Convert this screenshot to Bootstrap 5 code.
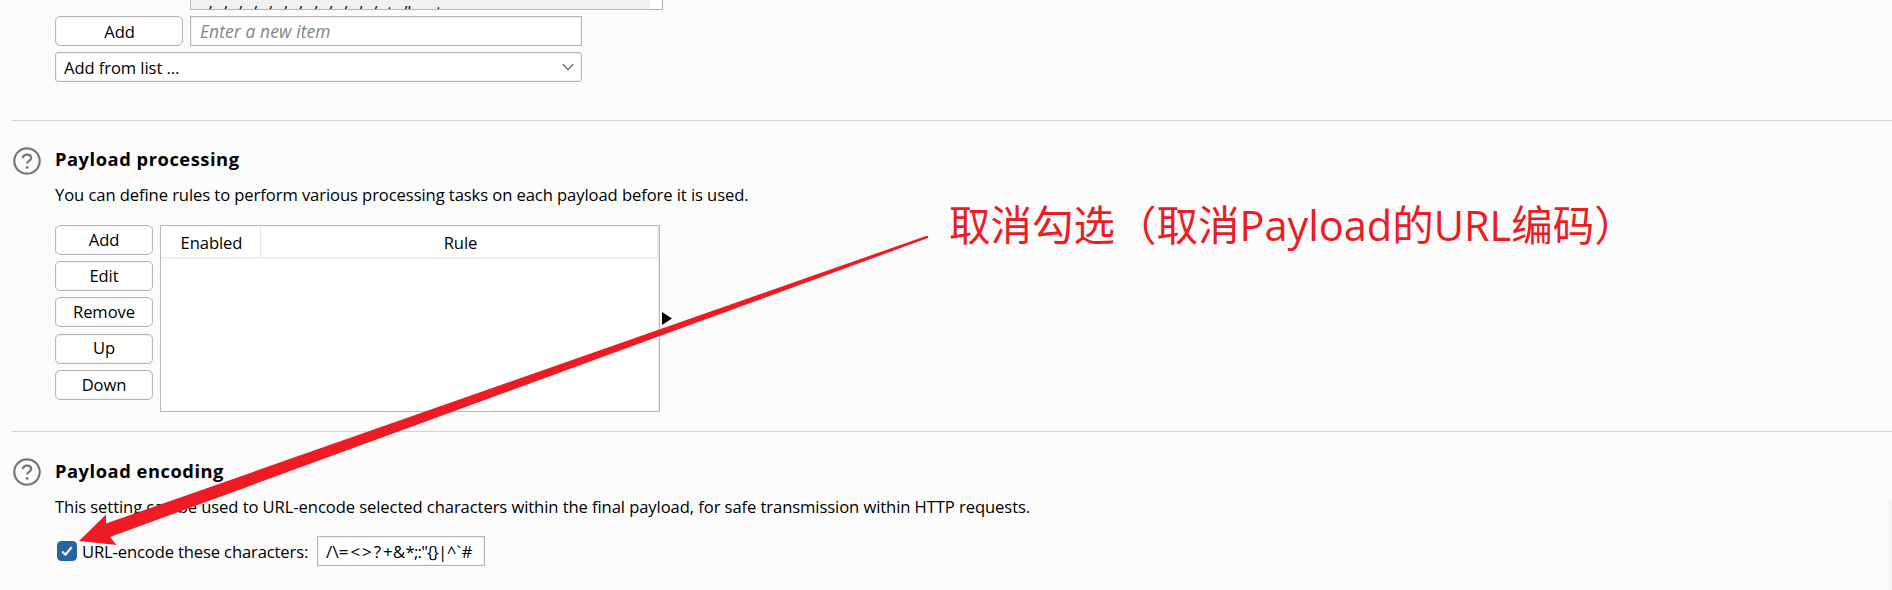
<!DOCTYPE html>
<html lang="en">
<head>
<meta charset="utf-8">
<title>Payload settings</title>
<link href="https://cdn.jsdelivr.net/npm/bootstrap@5.3.0/dist/css/bootstrap.min.css" rel="stylesheet">
<style>
body{width:1892px;height:590px;overflow:hidden;background:#fbfbfb;color:#000;font:16.6px/30px "Open Sans","Noto Sans CJK SC",sans-serif;letter-spacing:-.085px}
.pane{height:590px}
.items{width:473px;height:10px;margin-left:190px;border:1px solid #b9b3b3;border-top:0}
.item-row{width:459px;height:9px;background:#f1f1f1;padding-left:6px;line-height:24px;font-size:17px;letter-spacing:-.04px}
.tool{height:30px;padding:0;line-height:26.500px;font-size:inherit;letter-spacing:inherit;background:#fff;border:1px solid #b9b3b5;border-radius:5px;color:#000;box-shadow:inset 0 0 0 1px #f7f5f5}
.tool-wide{width:128px;line-height:27px;padding-left:1px}
.field{height:30px;padding:0 9px;line-height:28px;font-size:17px;background:#fff;border:1px solid #b9b3b5;border-radius:0;color:#000;box-shadow:inset 0 0 0 1px #f3f1f1}
.new-item{width:392px;margin-left:-1px;color:#858585;font-style:italic;font-size:17.4px;letter-spacing:.12px}
.pick{width:527px;border-radius:3px;padding:0 7px 0 8px;font-size:16.6px;line-height:29px;margin-top:6px}
.rule-line{height:1px;margin-left:12px;background:#d3d3d3}
.help{width:28px;height:28px;margin:3px 14px 0 13px;flex:none}
.title{font-size:18.3px;font-weight:700;letter-spacing:.55px;line-height:30px;margin:0}
.buttons{width:98px;margin-right:7px;row-gap:6.19px}
.rules{width:500px;height:187px;background:#fff;border:1px solid #b9b6b6;box-shadow:inset -1px 0 0 #eee}
.rules-head{height:33px;border-bottom:2px solid #eee;line-height:34px}
.col-on{width:100px;padding-left:2px;border-right:1px solid #e6e6e6}
.col-rule{padding-left:3px;border-right:2px solid #e9e9e9}
.check{width:20px;height:20px;margin:5px 5px 0 2px;flex:none}
.chars-label{width:226px;letter-spacing:-.14px;white-space:nowrap;line-height:31px}
.chars{width:168px;margin-left:9px;letter-spacing:.18px;line-height:29px;padding-left:8px}
.wide-op{letter-spacing:1.9px}
.tight-op{letter-spacing:-.85px}
.note{left:949px;top:197px;font-size:41.5px;line-height:57px;letter-spacing:0;color:#ed1c24;white-space:nowrap}
.edge{right:0;top:500px;width:6px;height:90px;background:linear-gradient(90deg,#fbfbfb,#f3f3f3)}
</style>
<script src="https://cdn.jsdelivr.net/npm/bootstrap@5.3.0/dist/js/bootstrap.bundle.min.js"></script>
</head>
<body>
<main class="pane position-relative overflow-hidden">
  <div class="items overflow-hidden bg-white"><div class="item-row overflow-hidden text-nowrap">../../../../../../../../../../../../etc/hosts</div></div>

  <div style="margin:6px 0 0 55px">
    <div class="d-flex">
      <button class="btn tool tool-wide me-2">Add</button>
      <div class="field new-item">Enter a new item</div>
    </div>
    <div class="field pick d-flex justify-content-between align-items-center">
      <span>Add from list ...</span>
      <svg width="12" height="8" viewBox="0 0 12 8"><path d="M.5 1 6 6.600 11.500 1" fill="none" stroke="#777" stroke-width="1.400"/></svg>
    </div>
  </div>

  <div class="rule-line" style="margin-top:38px"></div>

  <section class="d-flex" style="margin-top:23px">
    <svg class="help" viewBox="0 0 28 28"><circle cx="14" cy="14" r="12.700" fill="none" stroke="#777" stroke-width="2.200"/><path d="M9.800 11.200c.2-2.300 1.900-3.600 4.200-3.600s4.100 1.300 4.100 3.300c0 3-4 3-4 5.700" fill="none" stroke="#777" stroke-width="2.200"/><circle cx="14.100" cy="20.400" r="1.400" fill="#777"/></svg>
    <div>
      <h2 class="title">Payload processing</h2>
      <p class="mb-0" style="margin-top:6px">You can define rules to perform various processing tasks on each payload before it is used.</p>
      <div class="d-flex" style="margin-top:15px">
        <div class="buttons d-grid align-content-start">
          <button class="btn tool">Add</button>
          <button class="btn tool">Edit</button>
          <button class="btn tool">Remove</button>
          <button class="btn tool">Up</button>
          <button class="btn tool">Down</button>
        </div>
        <div class="rules">
          <div class="rules-head d-flex text-center">
            <div class="col-on">Enabled</div>
            <div class="col-rule flex-fill">Rule</div>
          </div>
        </div>
        <svg class="align-self-center" width="10" height="13" viewBox="0 0 10 13" style="margin:0 0 0 2px"><path d="M0 0 10 6.500 0 13z"/></svg>
      </div>
    </div>
  </section>

  <div class="rule-line" style="margin-top:19px"></div>

  <section class="d-flex" style="margin-top:24px">
    <svg class="help" style="margin-top:2px" viewBox="0 0 28 28"><circle cx="14" cy="14" r="12.700" fill="none" stroke="#777" stroke-width="2.200"/><path d="M9.800 11.200c.2-2.300 1.900-3.600 4.200-3.600s4.100 1.300 4.100 3.300c0 3-4 3-4 5.700" fill="none" stroke="#777" stroke-width="2.200"/><circle cx="14.100" cy="20.400" r="1.400" fill="#777"/></svg>
    <div>
      <h2 class="title">Payload encoding</h2>
      <p class="mb-0" style="margin-top:6px">This setting can be used to URL-encode selected characters within the final payload, for safe transmission within HTTP requests.</p>
      <div class="d-flex" style="margin-top:14px">
        <svg class="check" viewBox="0 0 20 20"><rect width="20" height="20" rx="4.500" fill="#2464a0"/><path d="m5.200 10.600 3.300 3.100 6.200-7.500" fill="none" stroke="#fff" stroke-width="2"/></svg>
        <span class="chars-label">URL-encode these characters:</span>
        <div class="field chars">/\<span class="wide-op">=&lt;&gt;?</span>+&amp;<span class="tight-op">*;:"{}|</span>^`#</div>
      </div>
    </div>
  </section>

  <svg class="position-absolute top-0 start-0" width="1892" height="590"><path fill="#ed1c24" d="M79 541 106 514.500 106 523.500 926 236 928 236 928 238 110 537 116.500 545z"/></svg>
  <div class="note position-absolute">取消勾选（取消Payload的URL编码）</div>
  <div class="edge position-absolute"></div>
</main>
</body>
</html>
